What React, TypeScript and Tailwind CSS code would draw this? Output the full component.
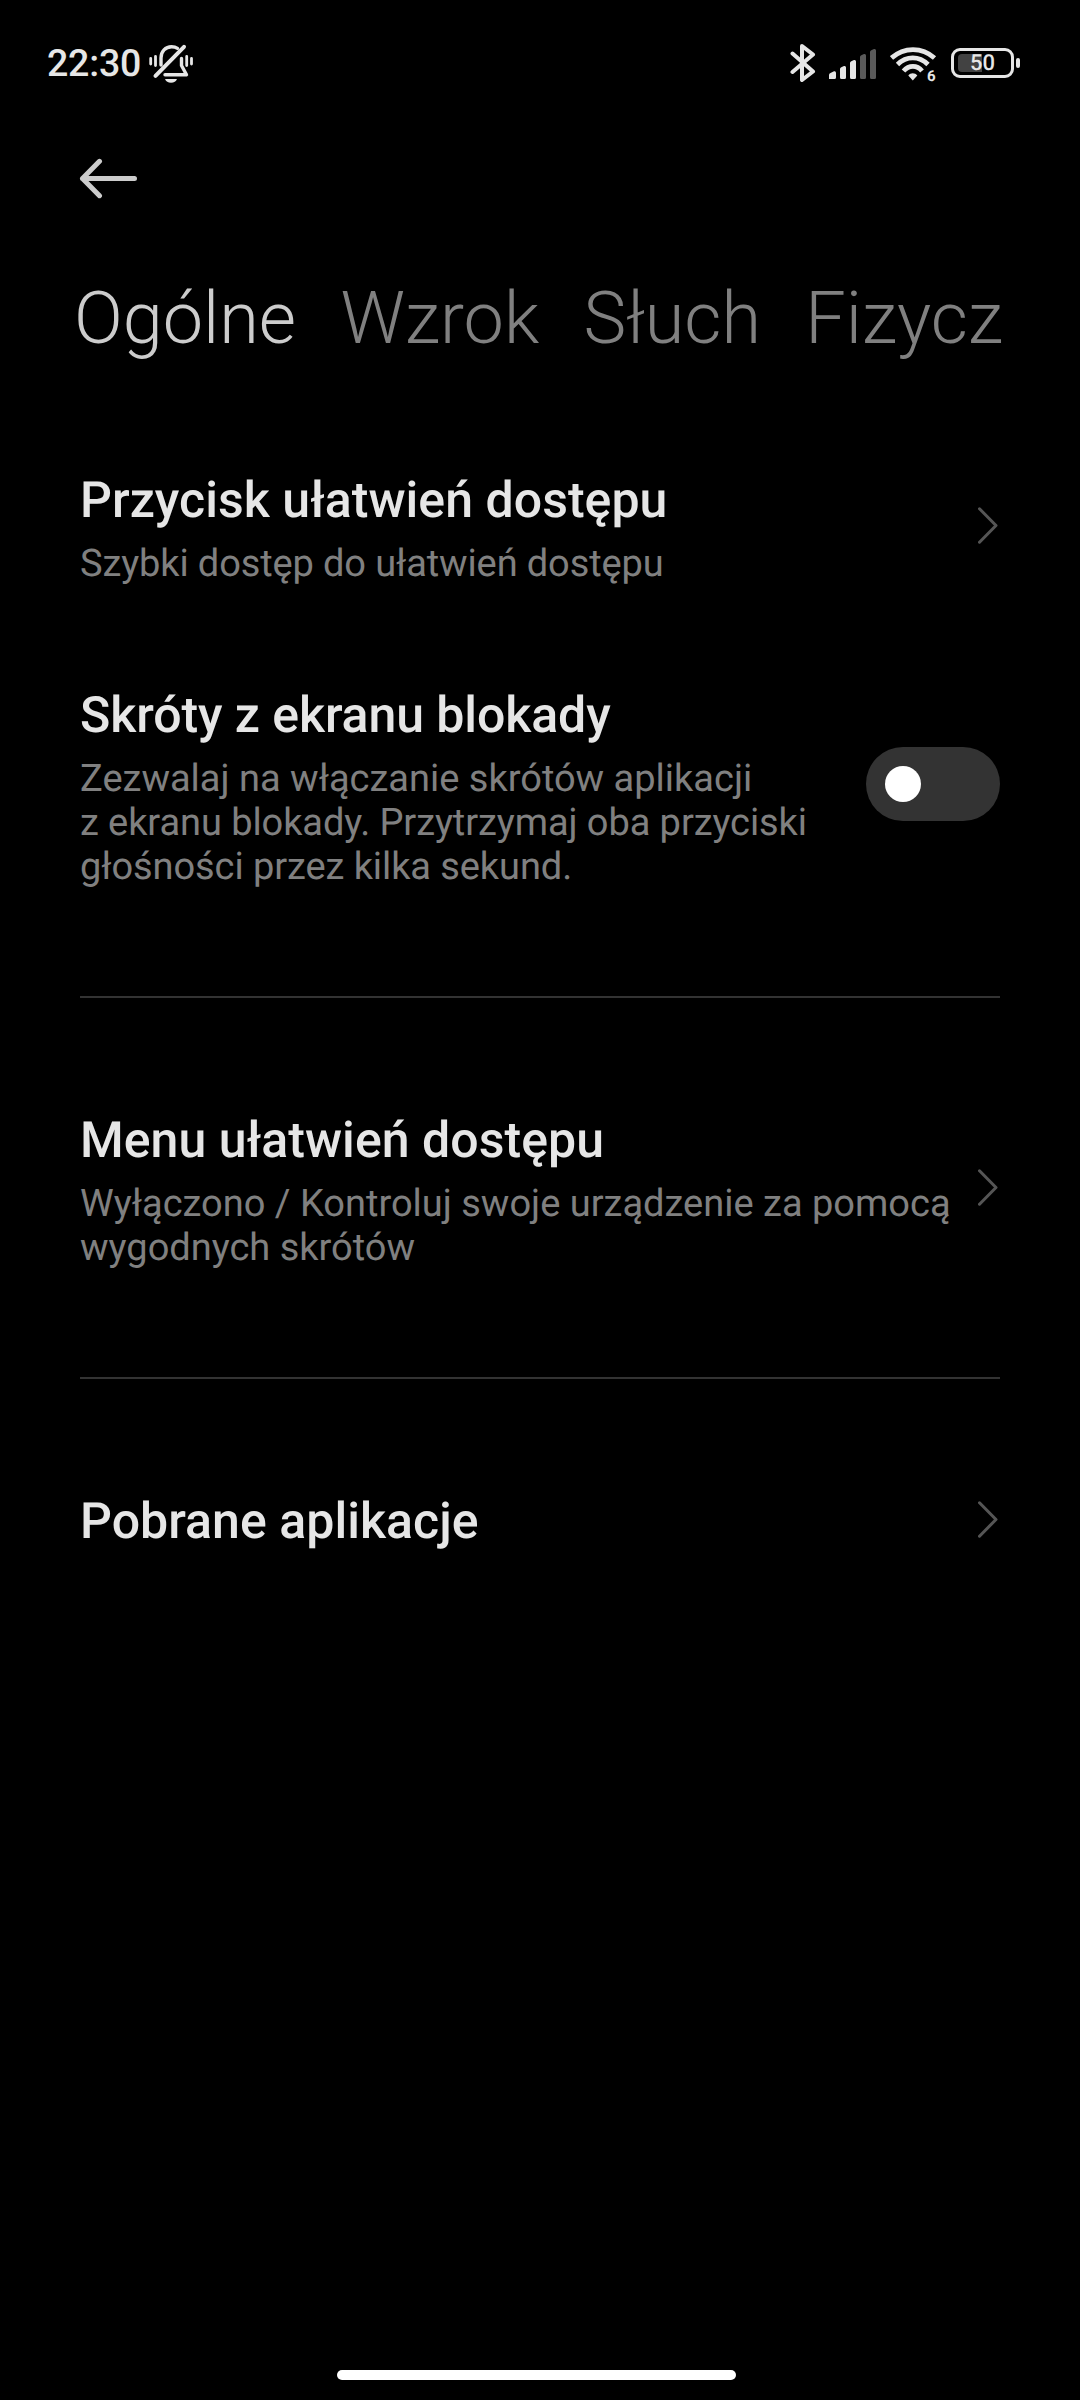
import { useState, type ReactNode } from "react";

const tabs = ["Ogólne", "Wzrok", "Słuch", "Fizycz"];

function BellOffIcon() {
  return (
    <svg width="46" height="40" viewBox="0 0 46 40" fill="none" stroke="#e6e6e6" strokeWidth="3.4" strokeLinecap="round" strokeLinejoin="round">
      <path d="M12 22V15C12 8.5 16.5 3.7 22.5 3.7C25 3.7 27 4.3 28.5 5.3" />
      <path d="M32.5 15.5V22.5L37.5 31.8H16" />
      <path d="M35 3.8L6.5 32.8" strokeWidth="4" />
      <path d="M16 36H28C27 38.5 25 39.7 22 39.7S17 38.5 16 36Z" fill="#e6e6e6" stroke="none" />
      <path d="M1.7 15.5V21M6.5 13.5V22.5M37.7 13.5V22.5M42.5 15.5V21" strokeWidth="2.8" />
    </svg>
  );
}

function BluetoothIcon() {
  return (
    <svg width="26" height="40" viewBox="0 0 26 40" fill="none" stroke="#e6e6e6" strokeWidth="4" strokeLinecap="round" strokeLinejoin="round">
      <path d="M2.5 10.5L23 28.5L12 37V3L23 11.5L2.5 29" />
    </svg>
  );
}

function SignalIcon() {
  return (
    <svg className="mt-0.5" width="48" height="32" viewBox="0 0 48 32">
      <g fill="#e6e6e6">
        <path d="M0 31V27Q0 25.5 1.5 25L5 23.3Q7 22.8 7 25V29.5Q7 31 5.5 31Z" />
        <path d="M11 29.5V21Q11 19.7 12.3 19.2L15 18Q17 17.5 17 19.5V29.5Q17 31 15.5 31H12.5Q11 31 11 29.5Z" />
        <path d="M21 29.5V15Q21 13.7 22.3 13.2L25 12Q27 11.5 27 13.5V29.5Q27 31 25.5 31H22.5Q21 31 21 29.5Z" />
      </g>
      <g fill="#5a5a5a">
        <path d="M31 29.5V9Q31 7.7 32.3 7.2L35 6Q37 5.5 37 7.5V29.5Q37 31 35.5 31H32.5Q31 31 31 29.5Z" />
        <path d="M41 29.5V4Q41 2.7 42.3 2.2L45 1Q47 0.5 47 2.5V29.5Q47 31 45.5 31H42.5Q41 31 41 29.5Z" />
      </g>
    </svg>
  );
}

function WifiIcon() {
  return (
    <div className="relative">
      <svg width="47" height="37" viewBox="0 0 47 37" fill="none" stroke="#e6e6e6" strokeWidth="4.8">
        <path d="M1.5 13C14 1.8 32 1.8 44.5 13" />
        <path d="M7.5 19.5C16.5 10.7 29 10.7 38 19.5" />
        <path d="M13.5 26C19 19.9 27 19.9 32 26" />
        <path d="M18.3 30.5C20.5 27.5 25 27.5 27.3 30.5L22.8 35.5Z" fill="#e6e6e6" stroke="none" />
      </svg>
      <span className="absolute top-[22px] left-[37px] text-[15px] leading-[18px] font-bold text-[#e6e6e6]">6</span>
    </div>
  );
}

function Battery() {
  return (
    <div className="ml-px flex items-center gap-[2px]">
      <div className="relative flex h-[30px] w-[63px] items-center justify-center rounded-[9px] border-3 border-[#e6e6e6]">
        <div className="absolute top-[3px] left-1 h-[18px] w-[24px] rounded-l-[4px] bg-[#424242]" />
        <span className="relative top-px text-[22px] leading-none font-medium text-[#e6e6e6]">50</span>
      </div>
      <div className="h-[10px] w-[4px] rounded-[2px] bg-[#e6e6e6]" />
    </div>
  );
}

function Chevron() {
  return (
    <svg className="mr-0.5 shrink-0" width="20" height="37" viewBox="0 0 20 37" fill="none" stroke="#555555" strokeWidth="3" strokeLinecap="round" strokeLinejoin="round">
      <path d="M1.5 1.8L18 18.5L1.5 35.2" />
    </svg>
  );
}

function Toggle() {
  const [on, setOn] = useState(false);
  return (
    <button
      role="switch"
      aria-checked={on}
      onClick={() => setOn(!on)}
      className={`flex h-[74px] w-[134px] shrink-0 items-center rounded-full px-[19px] ${on ? "justify-end bg-blue-500" : "bg-[#333333]"}`}
    >
      <span className="size-9 rounded-full bg-white" />
    </button>
  );
}

function Row({ title, lines = [], className, children }: { title: string; lines?: string[]; className: string; children: ReactNode }) {
  return (
    <div className={`flex items-center justify-between ${className}`}>
      <div className="whitespace-nowrap">
        <h2 className="text-[50px] leading-[58px] font-medium text-[#e6e6e6]">{title}</h2>
        {lines.length > 0 && (
          <p className="mt-3 text-[38px] leading-[44px] text-[#808080]">
            {lines.map((line) => (
              <span key={line} className="block">{line}</span>
            ))}
          </p>
        )}
      </div>
      <div className={lines.length > 0 ? "pb-2" : "pb-[5px]"}>{children}</div>
    </div>
  );
}

export default function App() {
  const [active, setActive] = useState("Ogólne");

  return (
    <main className="flex h-[2400px] w-[1080px] flex-col overflow-hidden bg-black font-[Roboto,sans-serif] [text-rendering:geometricPrecision]">
      {/* Status bar */}
      <header className="flex h-[126px] items-center justify-between pr-[60px] pl-[47px]">
        <div className="flex items-center gap-[7px]">
          <span className="w-[95px] pt-1 text-[37.5px] leading-none font-medium tracking-[-0.2px] text-[#e6e6e6]">22:30</span>
          <BellOffIcon />
        </div>
        <div className="flex items-center gap-[13px]">
          <BluetoothIcon />
          <SignalIcon />
          <WifiIcon />
          <Battery />
        </div>
      </header>

      <button aria-label="Wstecz" className="mt-8 ml-[79px] h-[41px] w-[60px]">
        <svg width="60" height="41" viewBox="0 0 60 41" fill="none" stroke="#cccccc" strokeWidth="5" strokeLinecap="round" strokeLinejoin="round">
          <path d="M20.5 3.3L3.5 20.5L20.5 37.7M3.5 20.5H55.5" />
        </svg>
      </button>

      <nav className="mt-[78px] ml-[74px] flex gap-[44.3px]">
        {tabs.map((tab) => (
          <button
            key={tab}
            onClick={() => setActive(tab)}
            className={`text-[72px] leading-[84px] font-light ${tab === active ? "text-[#cccccc]" : "text-[#808080]"}`}
          >
            {tab}
          </button>
        ))}
      </nav>

      <section className="flex flex-col px-20">
        <Row
          title="Przycisk ułatwień dostępu"
          lines={["Szybki dostęp do ułatwień dostępu"]}
          className="mt-[111px] [&_h2]:tracking-[0.04px] [&_p]:tracking-[-0.12px]"
        >
          <Chevron />
        </Row>
        <Row
          title="Skróty z ekranu blokady"
          lines={["Zezwalaj na włączanie skrótów aplikacji", "z ekranu blokady. Przytrzymaj oba przyciski", "głośności przez kilka sekund."]}
          className="mt-[101px] [&_h2]:tracking-[-0.08px] [&_span+span]:tracking-[-0.08px]"
        >
          <Toggle />
        </Row>
        <div className="mt-[107px] h-[2px] bg-[#333333]" />
        <Row
          title="Menu ułatwień dostępu"
          lines={["Wyłączono / Kontroluj swoje urządzenie za pomocą", "wygodnych skrótów"]}
          className="mt-[114px] [&_h2]:tracking-[0.05px]"
        >
          <Chevron />
        </Row>
        <div className="mt-[107px] h-[2px] bg-[#333333]" />
        <Row title="Pobrane aplikacje" className="mt-[114px] [&_h2]:tracking-[0.05px]">
          <Chevron />
        </Row>
      </section>

      {/* Gesture bar */}
      <div className="mt-auto mb-5 ml-[337px] h-[10px] w-[399px] rounded-full bg-white" />
    </main>
  );
}
